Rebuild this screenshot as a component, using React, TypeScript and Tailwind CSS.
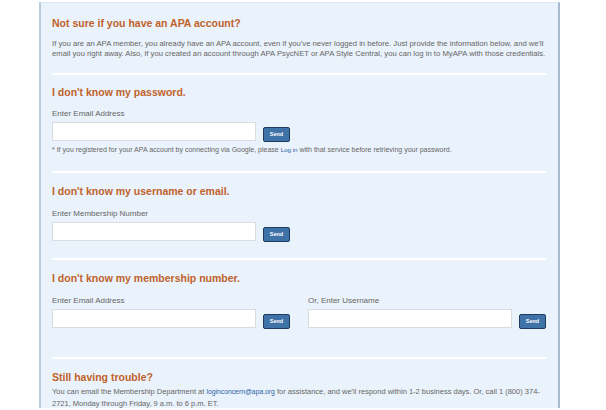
function SendButton() {
  return (
    <button
      type="button"
      className="h-[15px] w-[27px] rounded-[2px] border border-[#1d3b5c] bg-[#3f73a8] text-[5.5px] font-bold leading-none text-white"
    >
      Send
    </button>
  );
}

function Field({ label }: { label: string }) {
  return (
    <div className="w-[256px] shrink-0">
      <div className="text-[8px] leading-[10px] text-[#666]">{label}</div>
      <div className="flex items-center">
        <input
          type="text"
          className="h-[19px] w-[204px] border border-[#d9dde2] bg-white outline-none"
        />
        <div className="ml-[7px]">
          <SendButton />
        </div>
      </div>
    </div>
  );
}

function Heading({ children }: { children: React.ReactNode }) {
  return (
    <h2 className="text-[10.5px] font-bold leading-[14px] text-[#c0622c]">{children}</h2>
  );
}

export default function App() {
  return (
    <div
      className="h-[410px] overflow-hidden bg-white"
      style={{ fontFamily: '"Liberation Sans", Arial, sans-serif' }}
    >
      <div className="ml-[39px] mt-[2px] h-[406px] w-[521px] border-x-2 border-t border-l-[#b9cadb] border-r-[#a7bbcf] border-t-[#dde8f3] bg-[#eaf2fb] pl-[11px] pr-[12px]">
        {/* intro */}
        <section className="border-b-2 border-white pb-[15px] pt-[13px]">
          <Heading>Not sure if you have an APA account?</Heading>
          <p className="mt-[9px] text-[7.7px] leading-[9.5px] text-[#666]">
            If you are an APA member, you already have an APA account, even if you've never
            logged in before. Just provide the information below, and we'll email you right
            away. Also, if you created an account through APA PsycNET or APA Style Central, you
            can log in to MyAPA with those credentials.
          </p>
        </section>

        {/* password */}
        <section className="border-b-2 border-white pb-[17px] pt-[10px]">
          <Heading>I don't know my password.</Heading>
          <div className="mt-[10px]">
            <Field label="Enter Email Address" />
          </div>
          <p className="mt-[3px] text-[7px] leading-[8px] text-[#666]">
            * If you registered for your APA account by connecting via Google, please{' '}
            <span className="text-[6.2px] text-[#2b5fa8]">Log in</span> with that service before
            retrieving your password.
          </p>
        </section>

        {/* username */}
        <section className="border-b-2 border-white pb-[15px] pt-[11px]">
          <Heading>I don't know my username or email.</Heading>
          <div className="mt-[11px]">
            <Field label="Enter Membership Number" />
          </div>
        </section>

        {/* membership number */}
        <section className="border-b-2 border-white pb-[27px] pt-[11px]">
          <Heading>I don't know my membership number.</Heading>
          <div className="mt-[11px] flex">
            <Field label="Enter Email Address" />
            <Field label="Or, Enter Username" />
          </div>
        </section>

        {/* contact */}
        <section className="pt-[11px]">
          <Heading>Still having trouble?</Heading>
          <p className="mt-[2px] text-[7.5px] leading-[11.5px] text-[#666]">
            You can email the Membership Department at{' '}
            <span className="text-[6.8px] text-[#2b5fa8]">loginconcern@apa.org</span> for
            assistance, and we'll respond within 1-2 business days. Or, call 1 (800) 374-2721,
            Monday through Friday, 9 a.m. to 6 p.m. ET.
          </p>
        </section>
      </div>
    </div>
  );
}
